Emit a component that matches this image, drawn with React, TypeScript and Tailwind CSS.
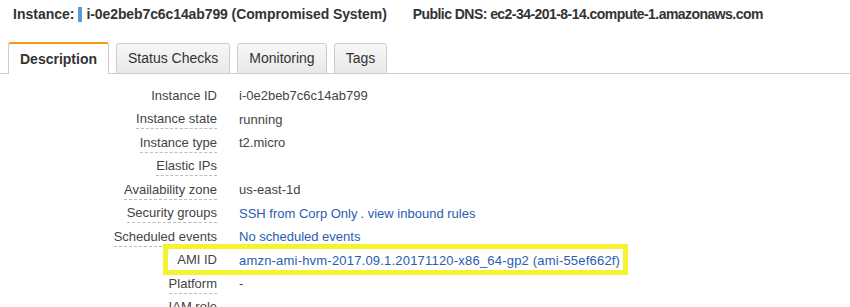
import React from "react";

type Row = {
  label: string;
  value?: React.ReactNode;
  tip?: boolean;
};

const link = "text-[#2a5db0]";

const rows: Row[] = [
  { label: "Instance ID", value: "i-0e2beb7c6c14ab799" },
  { label: "Instance state", value: "running", tip: true },
  { label: "Instance type", value: "t2.micro", tip: true },
  { label: "Elastic IPs", tip: true },
  { label: "Availability zone", value: "us-east-1d", tip: true },
  {
    label: "Security groups",
    tip: true,
    value: (
      <>
        <span className={link}>SSH from Corp Only</span>
        <span className="ml-[3px]">. </span>
        <span className={link}>view inbound rules</span>
      </>
    ),
  },
  { label: "Scheduled events", tip: true, value: <span className={link}>No scheduled events</span> },
  {
    label: "AMI ID",
    value: (
      <span className={`${link} tracking-[0.2px]`}>
        amzn-ami-hvm-2017.09.1.20171120-x86_64-gp2 (ami-55ef662f)
      </span>
    ),
  },
  { label: "Platform", value: "-", tip: true },
  { label: "IAM role", tip: true },
];

const tabs = ["Description", "Status Checks", "Monitoring", "Tags"];

export default function App() {
  return (
    <div className="w-[850px] h-[307px] overflow-hidden bg-white font-['Liberation_Sans',Arial,sans-serif] text-[#444]">
      {/* Header */}
      <div className="flex items-center h-[28px] pl-[13px] text-[14px] font-bold text-[#333] whitespace-nowrap">
        <span>Instance:</span>
        <span className="inline-block w-[4px] h-[15px] bg-[#5b9bd5] ml-[4px] mr-[4px]" />
        <span className="tracking-[-0.1px]">i-0e2beb7c6c14ab799 (Compromised System)</span>
        <span className="ml-[26px] tracking-[-0.55px]">Public DNS: ec2-34-201-8-14.compute-1.amazonaws.com</span>
      </div>

      {/* Tabs */}
      <div className="mt-[14px] flex items-end gap-[7px] pl-[8px] border-b border-[#ccc] h-[32px]">
        {tabs.map((t, i) =>
          i === 0 ? (
            <div
              key={t}
              className="-mb-px h-[32px] px-[11px] flex items-center bg-white border-x border-[#ccc] border-t-2 border-t-[#f39c12] rounded-t-[3px] text-[14px] font-bold text-[#333]"
            >
              {t}
            </div>
          ) : (
            <div
              key={t}
              className="-mb-px h-[31px] px-[11px] flex items-center bg-gradient-to-b from-[#f7f7f7] to-[#e8e8e8] border border-[#ccc] rounded-t-[3px] text-[14px] text-[#333]"
            >
              {t}
            </div>
          )
        )}
      </div>

      {/* Details */}
      <div className="relative pt-[10px] text-[13px]">
        {rows.map((r) => (
          <div key={r.label} className="flex items-center h-[23.5px] whitespace-nowrap">
            <div className="w-[217px] text-right">
              <span
                className={
                  r.tip
                    ? "inline-block leading-[17px] pb-[1px] border-b border-dashed border-[#bdbdbd]"
                    : "inline-block leading-[17px] pb-[1px] border-b border-transparent"
                }
              >
                {r.label}
              </span>
            </div>
            <div className="ml-[22px]">{r.value}</div>
          </div>
        ))}
        {/* annotation highlight */}
        <div className="absolute left-[163px] top-[170px] w-[465px] h-[31px] border-[5px] border-[#f5f232]" />
      </div>
    </div>
  );
}
